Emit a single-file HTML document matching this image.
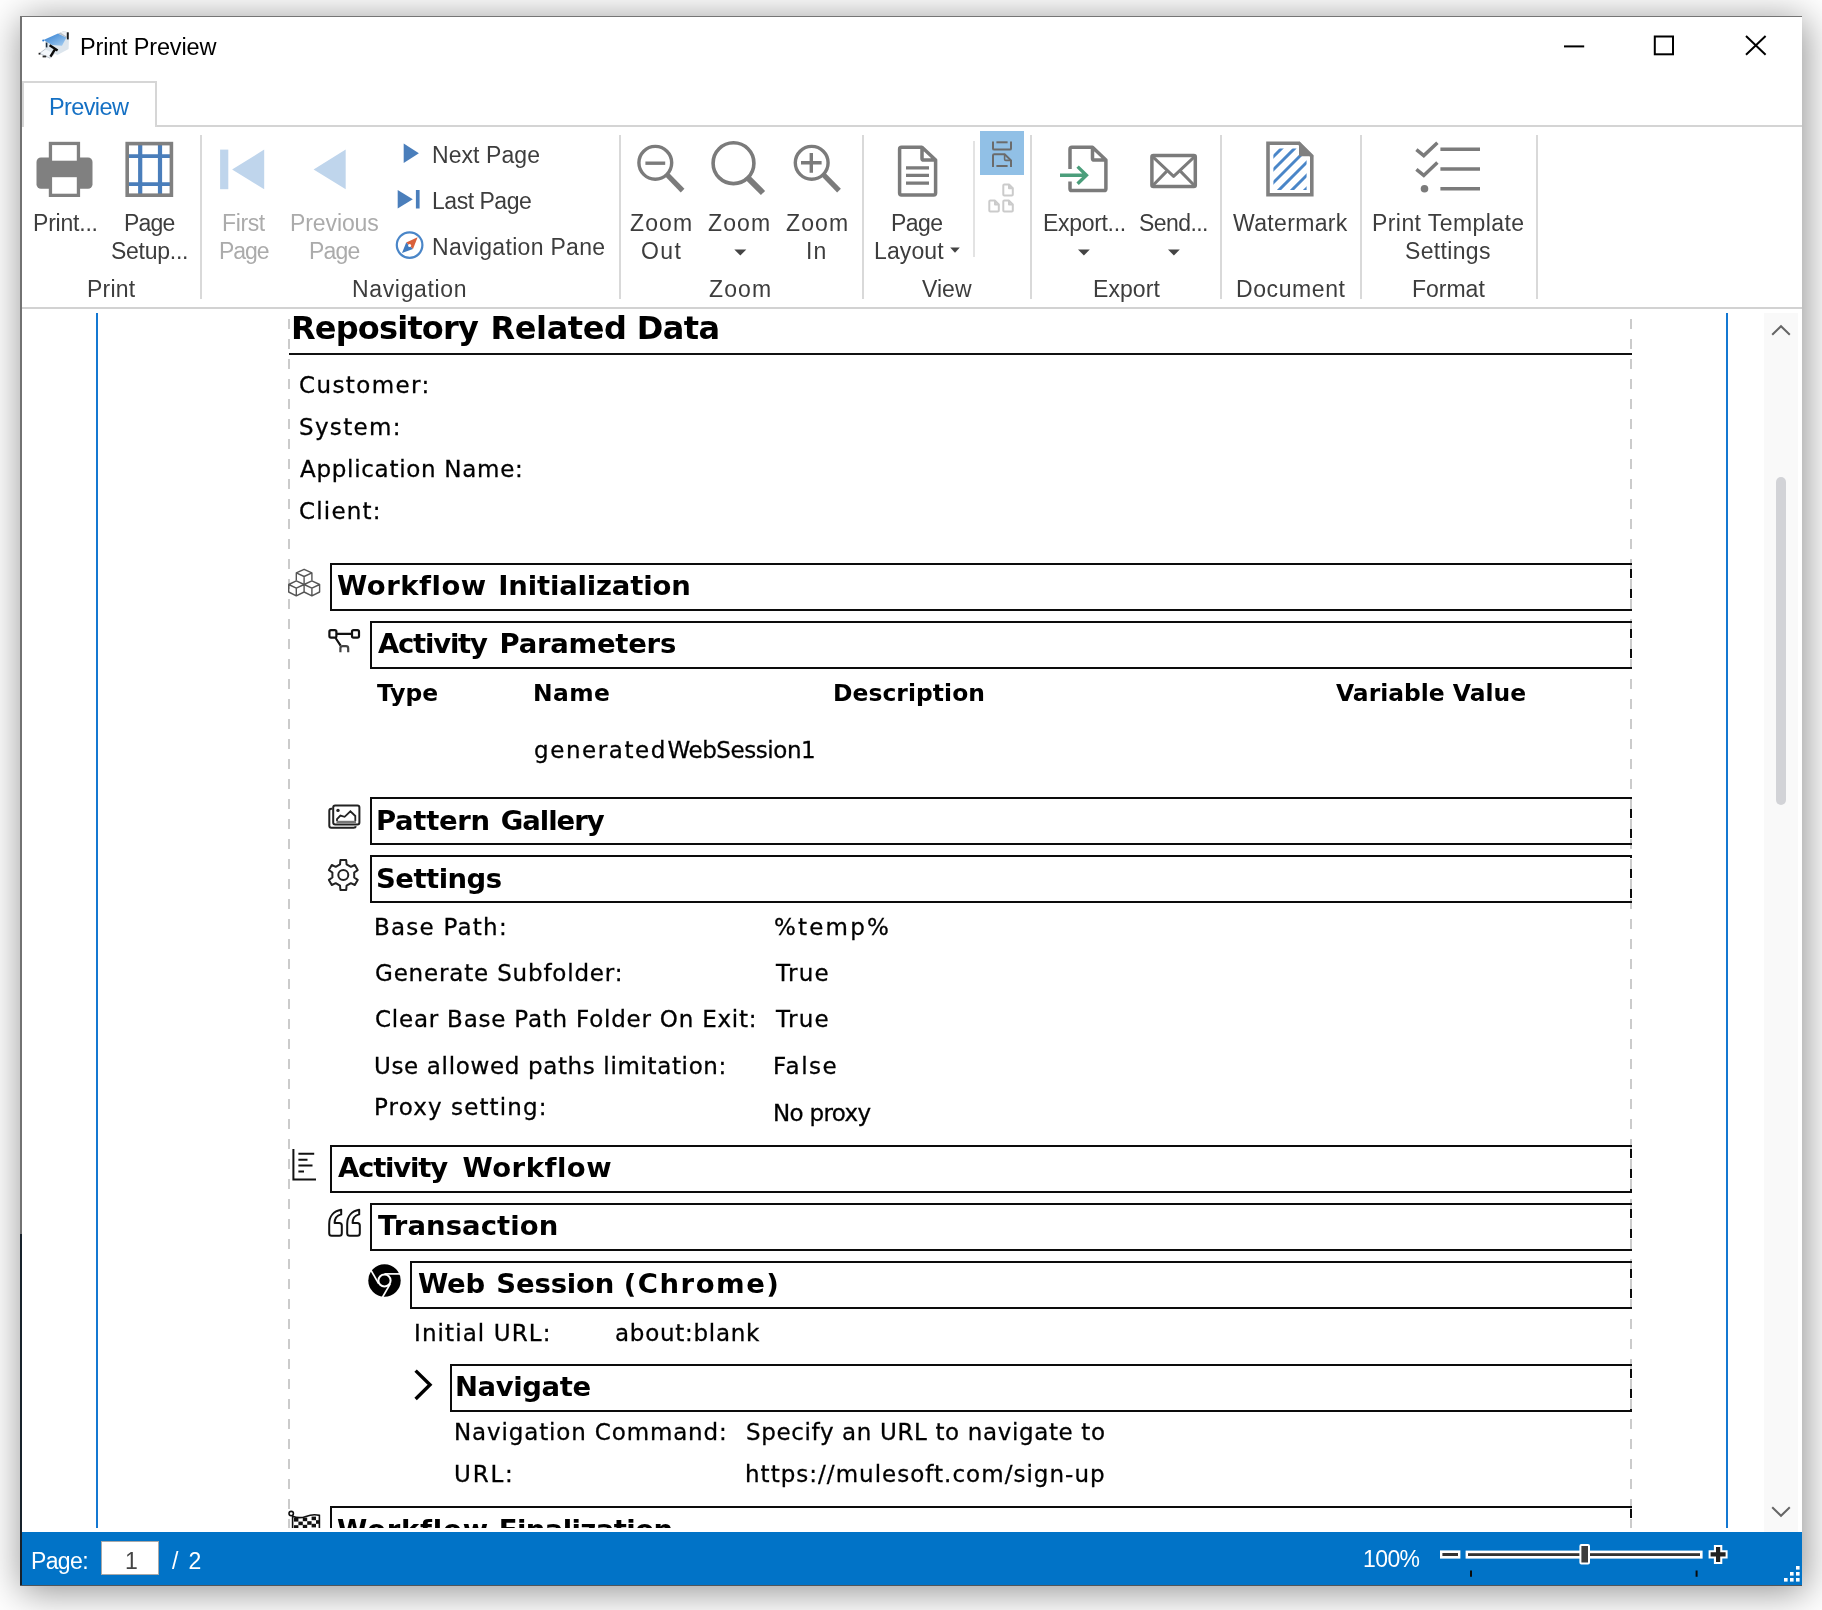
<!DOCTYPE html>
<html lang="en">
<head>
<meta charset="utf-8">
<title>Print Preview</title>
<style>
html,body{margin:0;padding:0;}
body{width:1822px;height:1610px;overflow:hidden;background:#fff;position:relative;font-family:"Liberation Sans",sans-serif;}
.abs,.t{position:absolute;}
.t{white-space:nowrap;display:block;}
#shadow{left:20px;top:16px;width:1782px;height:1570px;box-shadow:2px 4px 36px 1.5px rgba(0,0,0,.43);background:#fff;}
#win{left:20px;top:16px;width:1782px;height:1570px;background:#fff;}
#bl{left:20px;top:16px;width:2px;height:1570px;background:linear-gradient(#727272 0,#727272 1218px,#17212b 1218px,#17212b 100%);}
#bt{left:20px;top:16px;width:1782px;height:1px;background:#757575;}
#bb{left:20px;top:1585px;width:1782px;height:1px;background:#4f565c;}
.hl{background:#d4d4d4;}
.sep{top:135px;width:2px;height:164px;background:#d9d9d9;}
#docclip{left:0;top:0;width:1822px;height:1528px;overflow:hidden;}
.box{border:2px solid #0c0c0c;border-right:none;height:44px;box-sizing:content-box;}
.rb{left:1630px;width:2px;height:48px;background:linear-gradient(to bottom,#0c0c0c 0,#0c0c0c 9.5px,transparent 9.5px,transparent 20px);background-size:2px 20px;}
.t,#docclip{will-change:transform;}
#docclip .t.r{-webkit-text-stroke:.3px #000;}
#status{left:22px;top:1532px;width:1780px;height:53px;background:#0173c7;}
svg{position:absolute;overflow:visible;}
</style>
</head>
<body>
<div id="shadow" class="abs"></div>
<div id="win" class="abs"></div>

<!-- ===== document viewport ===== -->
<div id="docclip" class="abs">
  <div class="abs" style="left:96px;top:313px;width:2px;height:1215px;background:#1478d2"></div>
  <div class="abs" style="left:1726px;top:313px;width:2px;height:1215px;background:#1478d2"></div>
  <!-- margins (dashed) -->
  <div class="abs" id="ml" style="left:288px;top:313px;width:2px;height:1215px;background:linear-gradient(to bottom,#cbcbcb 0,#cbcbcb 10px,transparent 10px,transparent 20px);background-size:2px 20px;background-position:0 6px"></div>
  <div class="abs" id="mr" style="left:1630px;top:313px;width:2px;height:1215px;background:linear-gradient(to bottom,#cbcbcb 0,#cbcbcb 10px,transparent 10px,transparent 20px);background-size:2px 20px;background-position:0 6px"></div>
  <div class="abs" style="left:289px;top:353px;width:1343px;height:2px;background:#111"></div>
    <!-- section header boxes -->
<div class="abs box" style="left:330px;top:563px;width:1300px"></div>
<div class="abs box" style="left:370px;top:621px;width:1260px"></div>
<div class="abs box" style="left:370px;top:797px;width:1260px"></div>
<div class="abs box" style="left:370px;top:855px;width:1260px"></div>
<div class="abs box" style="left:330px;top:1145px;width:1300px"></div>
<div class="abs box" style="left:370px;top:1203px;width:1260px"></div>
<div class="abs box" style="left:410px;top:1261px;width:1220px"></div>
<div class="abs box" style="left:450px;top:1364px;width:1180px"></div>
<div class="abs box" style="left:330px;top:1506px;width:1300px"></div>
<!-- right (dashed) borders of boxes -->
<div class="abs rb" style="top:563px;background-position:0 6px"></div><div class="abs rb" style="top:621px;background-position:0 8px"></div>
<div class="abs rb" style="top:797px;background-position:0 12px"></div><div class="abs rb" style="top:855px;background-position:0 14px"></div>
<div class="abs rb" style="top:1145px;background-position:0 4px"></div><div class="abs rb" style="top:1203px;background-position:0 6px"></div>
<div class="abs rb" style="top:1261px;background-position:0 8px"></div><div class="abs rb" style="top:1364px;background-position:0 5px"></div>
<div class="abs rb" style="top:1506px;background-position:0 3px"></div>

<svg style="left:0;top:0" width="1822" height="1528" viewBox="0 0 1822 1528" fill="none">
  <!-- cubes (Workflow Initialization) -->
  <g stroke="#555" stroke-width="1.4" stroke-linejoin="round">
    <path d="M304.1 569.3 L311.9 572.9 L304.1 576.5 L296.3 572.9 Z M296.3 572.9 V580.4 M311.9 572.9 V580.4 M304.1 576.5 V584.6"/>
    <path d="M296.3 580.9 L304.1 584.5 L296.3 588.1 L288.7 584.5 Z M288.7 584.5 V592 L296.3 595.8 L304.1 592 V584.5 M296.3 588.1 V595.8"/>
    <path d="M311.9 580.9 L319.6 584.5 L311.9 588.1 L304.1 584.5 Z M319.6 584.5 V592 L311.9 595.8 L304.1 592 M311.9 588.1 V595.8"/>
  </g>
  <!-- nodes (Activity Parameters) -->
  <g stroke="#111" stroke-width="2.2">
    <rect x="329.4" y="630.2" width="7" height="7.4" rx="1.6"/>
    <rect x="352" y="630.2" width="7" height="7.4" rx="1.6"/>
    <path d="M336.6 633.9 H352 M335.6 638 L340.6 645.6"/>
    <path d="M340.4 652.2 V648.4 Q340.4 646.2 342.6 646.2 H346 Q348.2 646.2 348.2 648.4 V652.2" stroke="#444"/>
  </g>
  <!-- gallery (Pattern Gallery) -->
  <g stroke="#222" stroke-width="2">
    <path d="M332.3 808.8 H331.3 Q329.3 808.8 329.3 810.8 V825.8 Q329.3 827.8 331.3 827.8 H353.6 Q355.6 827.8 355.9 826.2"/>
    <rect x="333.2" y="805.6" width="26.2" height="19" rx="2"/>
    <path d="M337 821 V819 L340.4 815.6 L344.6 816.8 L350.4 811.3 L355.3 816 V821" stroke-width="1.8"/>
    <path d="M336.5 822 H356" stroke="#777" stroke-width="2.4"/>
    <circle cx="338" cy="810.4" r="1.7" fill="#222" stroke="none"/>
  </g>
  <!-- gear (Settings) -->
  <g stroke="#222" stroke-width="2" stroke-linejoin="round">
    <circle cx="343.3" cy="875" r="5"/>
    <path d="M340.0 864.3 L340.4 860.1 L346.2 860.1 L346.6 864.3 L350.9 866.8 L354.8 865.0 L357.7 870.1 L354.2 872.5 L354.2 877.5 L357.7 879.9 L354.8 885.0 L350.9 883.2 L346.6 885.7 L346.2 889.9 L340.4 889.9 L340.0 885.7 L335.7 883.2 L331.8 885.0 L328.9 879.9 L332.4 877.5 L332.4 872.5 L328.9 870.1 L331.8 865.0 L335.7 866.8 Z"/>
  </g>
  <!-- list (Activity Workflow) -->
  <g stroke="#111" stroke-width="2">
    <path d="M293.4 1149 V1179.4 H316"/>
    <path d="M298.4 1153.7 H314.2 M298.4 1159.8 H307.5 M298.4 1165.5 H312.5 M298.4 1171.6 H304"/>
  </g>
  <!-- quotes (Transaction) -->
  <g stroke="#111" stroke-width="2" stroke-linejoin="round">
    <path id="q1" d="M341.2 1209.8 C333.5 1211.2 329.2 1216.6 329.2 1224 V1233.3 Q329.2 1235.8 331.7 1235.8 H339.3 Q341.8 1235.8 341.8 1233.3 V1225.6 Q341.8 1223.1 339.3 1223.1 H334.6 C334.6 1218.3 336.9 1215.4 341.2 1214.4 Z"/>
    <path d="M359.2 1209.8 C351.5 1211.2 347.2 1216.6 347.2 1224 V1233.3 Q347.2 1235.8 349.7 1235.8 H357.3 Q359.8 1235.8 359.8 1233.3 V1225.6 Q359.8 1223.1 357.3 1223.1 H352.6 C352.6 1218.3 354.9 1215.4 359.2 1214.4 Z"/>
  </g>
  <!-- chrome (Web Session) -->
  <circle cx="384.5" cy="1280.5" r="16.2" fill="#000"/>
  <circle cx="384.5" cy="1280.5" r="6.1" stroke="#fff" stroke-width="2"/>
  <g stroke="#fff" stroke-width="1.7">
    <path d="M384.50 1273.90 L400.29 1273.90"/> <path d="M390.22 1283.80 L382.32 1297.48"/> <path d="M378.78 1283.80 L370.89 1270.12"/>
  </g>
  <!-- chevron (Navigate) -->
  <path d="M415.6 1370.6 L430 1384.8 L415.6 1399" stroke="#000" stroke-width="3.4" stroke-linejoin="miter"/>
  <!-- flag (Workflow Finalization) -->
  <g stroke="#111" stroke-width="1.6">
    <circle cx="291.2" cy="1513.6" r="2.2"/>
    <path d="M292.6 1515.6 V1530"/>
    <path d="M292.6 1516.2 Q299 1519 306 1516.4 T319.4 1515.4 V1530"/>
  </g>
  <g fill="#111">
    <rect x="294" y="1518" width="4.4" height="3.6"/><rect x="302.8" y="1517.6" width="4.4" height="3.6"/><rect x="311.6" y="1516.6" width="4.4" height="3.6"/>
    <rect x="298.4" y="1521.6" width="4.4" height="3.6"/><rect x="307.2" y="1521.2" width="4.4" height="3.6"/><rect x="316" y="1520.2" width="3.4" height="3.6"/>
    <rect x="294" y="1525.2" width="4.4" height="3.6"/><rect x="302.8" y="1524.8" width="4.4" height="3.6"/><rect x="311.6" y="1523.8" width="4.4" height="3.6"/>
  </g>
</svg>

  <span class="t" style='left:290.70px;top:308.50px;font:700 32px/38.00px "DejaVu Sans", "Liberation Sans", sans-serif;color:#000'><span style="letter-spacing:-0.812px;margin-left:0.000px">Repository</span> <span style="letter-spacing:-0.418px;margin-left:1.413px">Related</span> <span style="letter-spacing:-0.518px;margin-left:-0.929px">Data</span></span>
<span class="t r" style='left:299.00px;top:371.80px;font:400 23px/26.00px "DejaVu Sans", "Liberation Sans", sans-serif;letter-spacing:1.385px;color:#000'>Customer:</span>
<span class="t r" style='left:299.00px;top:413.80px;font:400 23px/26.00px "DejaVu Sans", "Liberation Sans", sans-serif;letter-spacing:1.322px;color:#000'>System:</span>
<span class="t r" style='left:300.00px;top:455.50px;font:400 23px/26.00px "DejaVu Sans", "Liberation Sans", sans-serif;letter-spacing:0.708px;color:#000'>Application Name:</span>
<span class="t r" style='left:299.00px;top:497.90px;font:400 23px/26.00px "DejaVu Sans", "Liberation Sans", sans-serif;letter-spacing:1.186px;color:#000'>Client:</span>
<span class="t" style='left:337.40px;top:571.30px;font:700 26.3px/30.00px "DejaVu Sans", "Liberation Sans", sans-serif;color:#000;transform:scaleX(1.045);transform-origin:0 0'><span style="letter-spacing:0.483px;margin-left:0.000px">Workflow</span> <span style="letter-spacing:-0.169px;margin-left:1.944px">Initialization</span></span>
<span class="t" style='left:378.20px;top:629.30px;font:700 26.3px/30.00px "DejaVu Sans", "Liberation Sans", sans-serif;color:#000;transform:scaleX(1.045);transform-origin:0 0'><span style="letter-spacing:-1.168px;margin-left:0.000px">Activity</span> <span style="letter-spacing:-0.237px;margin-left:3.077px">Parameters</span></span>
<span class="t" style='left:376.90px;top:680.00px;font:700 22.4px/26.00px "DejaVu Sans", "Liberation Sans", sans-serif;letter-spacing:0.013px;color:#000;transform:scaleX(1.045);transform-origin:0 0'>Type</span>
<span class="t" style='left:533.11px;top:680.00px;font:700 22.4px/26.00px "DejaVu Sans", "Liberation Sans", sans-serif;letter-spacing:0.371px;color:#000;transform:scaleX(1.045);transform-origin:0 0'>Name</span>
<span class="t" style='left:833.21px;top:680.00px;font:700 22.4px/26.00px "DejaVu Sans", "Liberation Sans", sans-serif;letter-spacing:0.061px;color:#000;transform:scaleX(1.045);transform-origin:0 0'>Description</span>
<span class="t" style='left:1335.70px;top:680.00px;font:700 22.4px/26.00px "DejaVu Sans", "Liberation Sans", sans-serif;letter-spacing:0.006px;color:#000;transform:scaleX(1.045);transform-origin:0 0'>Variable Value</span>
<span class="t r" style='left:534.40px;top:736.70px;font:400 23px/26.00px "DejaVu Sans", "Liberation Sans", sans-serif;color:#000'><span style="letter-spacing:1.563px;margin-left:0.000px">generated</span><span style="letter-spacing:-0.430px;margin-left:0.637px">WebSession1</span></span>
<span class="t" style='left:376.11px;top:805.60px;font:700 26.3px/30.00px "DejaVu Sans", "Liberation Sans", sans-serif;color:#000;transform:scaleX(1.045);transform-origin:0 0'><span style="letter-spacing:-0.285px;margin-left:-0.000px">Pattern</span> <span style="letter-spacing:-0.949px;margin-left:1.136px">Gallery</span></span>
<span class="t" style='left:376.35px;top:863.60px;font:700 26.3px/30.00px "DejaVu Sans", "Liberation Sans", sans-serif;letter-spacing:-0.490px;color:#000;transform:scaleX(1.045);transform-origin:0 0'>Settings</span>
<span class="t r" style='left:373.90px;top:914.40px;font:400 23px/26.00px "DejaVu Sans", "Liberation Sans", sans-serif;letter-spacing:1.229px;color:#000'>Base Path:</span>
<span class="t r" style='left:774.40px;top:914.40px;font:400 23px/26.00px "DejaVu Sans", "Liberation Sans", sans-serif;letter-spacing:2.195px;color:#000'>%temp%</span>
<span class="t r" style='left:374.90px;top:960.40px;font:400 23px/26.00px "DejaVu Sans", "Liberation Sans", sans-serif;letter-spacing:0.824px;color:#000'>Generate Subfolder:</span>
<span class="t r" style='left:776.40px;top:960.40px;font:400 23px/26.00px "DejaVu Sans", "Liberation Sans", sans-serif;letter-spacing:1.299px;color:#000'>True</span>
<span class="t r" style='left:374.90px;top:1006.20px;font:400 23px/26.00px "DejaVu Sans", "Liberation Sans", sans-serif;letter-spacing:0.775px;color:#000'>Clear Base Path Folder On Exit:</span>
<span class="t r" style='left:776.40px;top:1006.20px;font:400 23px/26.00px "DejaVu Sans", "Liberation Sans", sans-serif;letter-spacing:1.299px;color:#000'>True</span>
<span class="t r" style='left:373.90px;top:1052.70px;font:400 23px/26.00px "DejaVu Sans", "Liberation Sans", sans-serif;letter-spacing:0.649px;color:#000'>Use allowed paths limitation:</span>
<span class="t r" style='left:773.40px;top:1052.70px;font:400 23px/26.00px "DejaVu Sans", "Liberation Sans", sans-serif;letter-spacing:1.479px;color:#000'>False</span>
<span class="t r" style='left:373.90px;top:1094.40px;font:400 23px/26.00px "DejaVu Sans", "Liberation Sans", sans-serif;letter-spacing:1.127px;color:#000'>Proxy setting:</span>
<span class="t r" style='left:773.40px;top:1100.00px;font:400 23px/26.00px "DejaVu Sans", "Liberation Sans", sans-serif;letter-spacing:-0.659px;color:#000'>No proxy</span>
<span class="t" style='left:337.90px;top:1153.30px;font:700 26.3px/30.00px "DejaVu Sans", "Liberation Sans", sans-serif;color:#000;transform:scaleX(1.045);transform-origin:0 0'><span style="letter-spacing:-1.155px;margin-left:0.000px">Activity</span> <span style="letter-spacing:0.483px;margin-left:5.733px">Workflow</span></span>
<span class="t" style='left:378.20px;top:1210.90px;font:700 26.3px/30.00px "DejaVu Sans", "Liberation Sans", sans-serif;letter-spacing:0.069px;color:#000;transform:scaleX(1.045);transform-origin:0 0'>Transaction</span>
<span class="t" style='left:417.80px;top:1268.80px;font:700 26.3px/30.00px "DejaVu Sans", "Liberation Sans", sans-serif;color:#000;transform:scaleX(1.045);transform-origin:0 0'><span style="letter-spacing:-0.277px;margin-left:0.000px">Web</span> <span style="letter-spacing:-0.153px;margin-left:1.930px">Session</span> <span style="letter-spacing:1.455px;margin-left:-0.091px">(Chrome)</span></span>
<span class="t r" style='left:414.00px;top:1319.70px;font:400 23px/26.00px "DejaVu Sans", "Liberation Sans", sans-serif;letter-spacing:1.102px;color:#000'>Initial URL:</span>
<span class="t r" style='left:614.60px;top:1319.70px;font:400 23px/26.00px "DejaVu Sans", "Liberation Sans", sans-serif;letter-spacing:0.733px;color:#000'>about:blank</span>
<span class="t" style='left:455.21px;top:1372.00px;font:700 26.3px/30.00px "DejaVu Sans", "Liberation Sans", sans-serif;letter-spacing:-0.383px;color:#000;transform:scaleX(1.045);transform-origin:0 0'>Navigate</span>
<span class="t r" style='left:453.70px;top:1419.00px;font:400 23px/26.00px "DejaVu Sans", "Liberation Sans", sans-serif;letter-spacing:0.857px;color:#000'>Navigation Command:</span>
<span class="t r" style='left:746.00px;top:1419.00px;font:400 23px/26.00px "DejaVu Sans", "Liberation Sans", sans-serif;letter-spacing:0.636px;color:#000'>Specify an URL to navigate to</span>
<span class="t r" style='left:453.70px;top:1461.40px;font:400 23px/26.00px "DejaVu Sans", "Liberation Sans", sans-serif;letter-spacing:1.824px;color:#000'>URL:</span>
<span class="t r" style='left:745.00px;top:1461.40px;font:400 23px/26.00px "DejaVu Sans", "Liberation Sans", sans-serif;letter-spacing:1.024px;color:#000'>https://mulesoft.com/sign-up</span>
<span class="t" style='left:336.90px;top:1514.50px;font:700 26.3px/30.00px "DejaVu Sans", "Liberation Sans", sans-serif;color:#000;transform:scaleX(1.045);transform-origin:0 0'><span style="letter-spacing:0.729px;margin-left:0.000px">Workflow</span> <span style="letter-spacing:-0.556px;margin-left:0.358px">Finalization</span></span>
</div>

<!-- scrollbar -->
<div class="abs" style="left:1764px;top:313px;width:34px;height:1219px;background:#f9f9f9"></div>
<div class="abs" style="left:1776px;top:477px;width:10px;height:328px;border-radius:5px;background:#d2d3d7"></div>
<svg style="left:1764px;top:313px" width="34" height="1215" viewBox="0 0 34 1215" fill="none" stroke="#666" stroke-width="2">
  <path d="M8.2 21.8 L17 13.2 L25.8 21.8"/>
  <path d="M8.2 1194.2 L17 1202.8 L25.8 1194.2"/>
</svg>

<!-- ===== ribbon ===== -->
<div class="abs hl" style="left:22px;top:125px;width:1780px;height:2px"></div>
<div class="abs" id="tab" style="left:22px;top:81px;width:135px;height:46px;background:#fff;border:2px solid #d6d6d6;border-bottom:none;box-sizing:border-box"></div>
<div class="abs hl" style="left:22px;top:307px;width:1780px;height:2px;background:#d2d2d2"></div>
<div class="abs sep" style="left:200px"></div>
<div class="abs sep" style="left:619px"></div>
<div class="abs sep" style="left:862px"></div>
<div class="abs sep" style="left:1030px"></div>
<div class="abs sep" style="left:1220px"></div>
<div class="abs sep" style="left:1360px"></div>
<div class="abs sep" style="left:1536px"></div>
<div class="abs" style="left:973px;top:141px;width:2px;height:116px;background:#e3e3e3"></div>
<div class="abs" style="left:980px;top:131px;width:44px;height:44px;background:#91c0e6"></div>
<svg style="left:0;top:0" width="1822" height="320" viewBox="0 0 1822 320" fill="none">
  <!-- Print -->
  <g>
    <rect x="36.5" y="157.4" width="56" height="31.3" rx="4.5" fill="#808080"/>
    <rect x="48.8" y="141.8" width="31.3" height="55.2" fill="#808080"/>
    <rect x="52.1" y="145.1" width="24.7" height="15.6" fill="#fff"/>
    <rect x="52.1" y="177.2" width="24.7" height="16.5" fill="#fff"/>
  </g>
  <!-- Page Setup -->
  <g>
    <path d="M139.2 145 V194 M159 145 V194" stroke="#4a7ebb" stroke-width="4.2" transform="translate(1 0)"/>
    <path d="M128 156.1 H171 M128 184.1 H171" stroke="#4a7ebb" stroke-width="3.8"/>
    <rect x="127.2" y="143.6" width="44.2" height="51.6" stroke="#808080" stroke-width="3.6"/>
  </g>
  <!-- First / Previous (disabled) -->
  <g fill="#bfd5ec">
    <rect x="220.1" y="149.6" width="8.2" height="39.6"/>
    <path d="M232.1 169.4 L264.2 149.6 V189.2 Z"/>
    <path d="M313.6 169.4 L345.7 149.6 V189.2 Z"/>
  </g>
  <!-- Next / Last -->
  <g fill="#4a7ebb">
    <path d="M403.7 143.5 L418.9 153.2 L403.7 162.9 Z"/>
    <path d="M397.7 190 L412.8 199.2 L397.7 208.5 Z"/>
    <rect x="415.9" y="190" width="3.7" height="18.5"/>
  </g>
  <!-- Navigation pane compass -->
  <g>
    <circle cx="409.6" cy="245.1" r="12.8" stroke="#4a86c8" stroke-width="2.2"/>
    <path d="M406.2 242.4 L417.6 237.2 L413 248.9 L409.4 245.7 Z" fill="#d9603b"/>
    <path d="M406.2 242.4 L402 253 L413 248.9 L409.4 245.7 Z" fill="#3f7bbf"/>
    <circle cx="409.6" cy="245.6" r="1.5" fill="#fff"/>
  </g>
  <!-- Zoom Out -->
  <g stroke="#7b7b7b">
    <circle cx="655.3" cy="162.8" r="16.4" stroke-width="3.4"/>
    <path d="M645.4 163.2 H665.2" stroke-width="3.4"/>
    <path d="M667.4 175 L682.6 190.6" stroke-width="5.2"/>
  </g>
  <!-- Zoom -->
  <g stroke="#7b7b7b">
    <circle cx="733.5" cy="163.2" r="20.4" stroke-width="3.6"/>
    <path d="M748.4 178.4 L763 193" stroke-width="6"/>
  </g>
  <!-- Zoom In -->
  <g stroke="#7b7b7b">
    <circle cx="811.7" cy="162.8" r="16.4" stroke-width="3.4"/>
    <path d="M801 162.8 H821.6 M811.3 152.9 V172.7" stroke-width="3.4"/>
    <path d="M823.8 175 L839 190.6" stroke-width="5.2"/>
  </g>
  <!-- Page Layout -->
  <g stroke="#7b7b7b" stroke-width="3.5" stroke-linejoin="round">
    <path d="M922 147.3 H901.5 Q899.6 147.3 899.6 149.2 V193 Q899.6 194.9 901.5 194.9 H933.7 Q935.6 194.9 935.6 193 V160 L922 147.3 V158.4 Q922 160 923.8 160 H935.6"/>
    <path d="M906 167.8 H929 M906 175.4 H929 M906 183.2 H929" stroke-width="3.2"/>
  </g>
  <!-- view small buttons -->
  <g stroke="#6b6b6b" stroke-width="2">
    <path d="M993 141.5 V148.4 Q993 149.6 994.2 149.6 H1009.8 Q1011 149.6 1011 148.4 V141.5"/>
    <path d="M996.4 142.3 H1007.6"/>
    <path d="M993 167 V155.5 Q993 154.3 994.2 154.3 H1004.6 L1011 160.4 V167"/>
    <path d="M1004.6 154.8 V159.2 Q1004.6 160.4 1005.8 160.4 H1010.6" stroke-width="1.6"/>
    <path d="M996.4 166 H1007.6"/>
  </g>
  <g stroke="#cbcbcb" stroke-width="2" stroke-linejoin="round">
    <path d="M1009 184.5 H1004.3 Q1003.3 184.5 1003.3 185.5 V194.5 Q1003.3 195.5 1004.3 195.5 H1011.8 Q1012.8 195.5 1012.8 194.5 V188.3 Z M1009 184.5 V188.3 H1012.8"/>
    <path d="M995 200.6 H990.3 Q989.3 200.6 989.3 201.6 V210.6 Q989.3 211.6 990.3 211.6 H997.8 Q998.8 211.6 998.8 210.6 V204.4 Z M995 200.6 V204.4 H998.8"/>
    <path d="M1009 200.6 H1004.3 Q1003.3 200.6 1003.3 201.6 V210.6 Q1003.3 211.6 1004.3 211.6 H1011.8 Q1012.8 211.6 1012.8 210.6 V204.4 Z M1009 200.6 V204.4 H1012.8"/>
  </g>
  <!-- Export -->
  <g stroke-linejoin="round">
    <path d="M1070 169 V149.2 Q1070 147.3 1071.9 147.3 H1092.5 L1105.9 160 V188.7 Q1105.9 190.6 1104 190.6 H1071.9 Q1070 190.6 1070 188.7 V181.4 M1092.5 147.3 V158.4 Q1092.5 160 1094.3 160 H1105.9" stroke="#7b7b7b" stroke-width="3.5"/>
    <path d="M1060 175.2 H1085.5 M1077.6 166.6 L1086.4 175.2 L1077.6 183.8" stroke="#4b9e7b" stroke-width="3.4" stroke-linejoin="miter"/>
  </g>
  <!-- Send -->
  <g stroke="#7b7b7b" stroke-width="3.5" stroke-linejoin="round">
    <rect x="1151.9" y="155.6" width="43.4" height="31" rx="1.5"/>
    <path d="M1152.6 156.6 L1173.6 176.4 L1194.6 156.6" stroke-width="3"/>
    <path d="M1152.6 185.8 L1166.6 171.4 M1194.6 185.8 L1180.6 171.4" stroke-width="3"/>
  </g>
  <!-- Watermark -->
  <g>
    <clipPath id="wmclip"><path d="M1273.4 148.6 H1296.4 L1306.6 158.8 V190 H1273.4 Z"/></clipPath>
    <g clip-path="url(#wmclip)" stroke="#4a86c8" stroke-width="3">
      <path d="M1262 168 L1296 134 M1262 181 L1309 134 M1262 194 L1322 134 M1268 201 L1322 147 M1281 201 L1322 160 M1294 201 L1322 173"/>
    </g>
    <path d="M1299 143.2 H1268 V194.8 H1311.8 V156 Z" stroke="#808080" stroke-width="3.6" stroke-linejoin="miter"/>
    <path d="M1299 141.6 L1313.6 156.2 H1299 Z" fill="#808080"/>
  </g>
  <!-- Print template settings (checklist) -->
  <g stroke="#7b7b7b" stroke-width="3.5">
    <path d="M1416.4 149.6 L1423.8 155.6 L1437.4 142.8"/>
    <path d="M1416.4 169.4 L1423.8 175.4 L1437.4 162.6"/>
    <path d="M1440.4 149.3 H1480 M1440.4 169.1 H1480 M1440.4 188.8 H1480"/>
    <circle cx="1424.5" cy="188.8" r="3.8" fill="#7b7b7b" stroke="none"/>
  </g>
  <!-- dropdown arrows -->
  <g fill="#444">
    <path d="M734.3 249.6 H746.3 L740.3 255.4 Z"/>
    <path d="M950.2 247.6 H959.8 L955 252.8 Z"/>
    <path d="M1078 249.6 H1089.8 L1083.9 255.4 Z"/>
    <path d="M1168 249.6 H1179.8 L1173.9 255.4 Z"/>
  </g>
  <!-- window controls -->
  <g stroke="#000" stroke-width="2">
    <path d="M1564 46.4 H1584.2"/>
    <rect x="1654.8" y="36.5" width="18.2" height="17.8"/>
    <path d="M1746 36 L1765.6 54.8 M1765.6 36 L1746 54.8"/>
  </g>
  <!-- title bar app icon (printer) -->
  <defs>
    <linearGradient id="pblue" x1="0" y1="0" x2="1" y2="1">
      <stop offset="0" stop-color="#2b7bd0"/><stop offset="1" stop-color="#a9d0f2"/>
    </linearGradient>
  </defs>
  <g>
    <path d="M39.5 53.4 L51.5 44.5 L60 47.6 L50.2 58.2 Z" fill="#f3f7fb" stroke="#aeb8c2" stroke-width=".8"/>
    <path d="M45 40.5 L58 34.5 L69 38 L68.6 49 L57.4 55 L45.6 49.6 Z" fill="#dce5ed"/>
    <path d="M43.5 40 L58 33.5 L66.4 37.4 L62 45.8 L52 45 Z" fill="url(#pblue)"/>
    <path d="M58 33.6 L63.6 31.2 L69 32.6 L68.6 39.6 L66.2 37.4 Z" fill="#b9c0c7"/>
    <path d="M60.4 32.4 L64 31.2 L66.6 32 L66.4 36.4 Z" fill="#eef1f4"/>
    <path d="M49.6 45.2 L57.6 50.4 M55.4 48.6 L50.4 56.6" stroke="#0a0a0a" stroke-width="2.4"/>
    <path d="M67.8 32.4 V39.4" stroke="#1a1a1a" stroke-width="1.8"/>
    <path d="M46.6 42.6 V47.4" stroke="#1b2b3b" stroke-width="1.6"/>
    <circle cx="43.2" cy="40.6" r="1" fill="#2b7bd0"/>
    <rect x="38.6" y="52.8" width="1.8" height="1.8" fill="#222"/>
    <rect x="42.6" y="55.6" width="3.6" height="1.8" fill="#2a2a2a"/>
  </g>
</svg>


<!-- ===== status bar ===== -->
<div id="status" class="abs"></div>
<div class="abs" style="left:101px;top:1541px;width:58px;height:34px;background:#fff;border:1px solid #a9a9a9;box-sizing:border-box"></div>
<svg style="left:0;top:1532px" width="1822" height="54" viewBox="0 1532 1822 54" fill="none">
  <!-- zoom slider -->
  <rect x="1440" y="1550.4" width="20.4" height="8.2" fill="#fff"/><rect x="1442.4" y="1553" width="15.6" height="3" fill="#333"/>
  <rect x="1465.6" y="1550.6" width="237" height="8" fill="#fff"/><rect x="1468" y="1553.2" width="232" height="2.8" fill="#333"/>
  <rect x="1580.4" y="1545" width="8.6" height="18.6" rx="1" fill="#3c3c3c" stroke="#fff" stroke-width="2"/>
  <path d="M1708.6 1554.4 H1727.6 M1718.1 1544.9 V1563.9" stroke="#fff" stroke-width="8.4"/>
  <path d="M1710.6 1554.4 H1725.6 M1718.1 1546.9 V1561.9" stroke="#222" stroke-width="4.2"/>
  <path d="M1471 1570.4 V1576.8 M1696.6 1570.4 V1576.8" stroke="#0a0a0a" stroke-width="2"/>
  <!-- size grip -->
  <g fill="#fff">
    <rect x="1796" y="1566" width="3.6" height="3.6"/>
    <rect x="1790" y="1572" width="3.6" height="3.6"/><rect x="1796" y="1572" width="3.6" height="3.6"/>
    <rect x="1784" y="1578" width="3.6" height="3.6"/><rect x="1790" y="1578" width="3.6" height="3.6"/><rect x="1796" y="1578" width="3.6" height="3.6"/>
  </g>
</svg>

<span class="t" style='left:80.20px;top:34.40px;font:400 23.5px/26.00px "Liberation Sans", sans-serif;letter-spacing:-0.172px;color:#000'>Print Preview</span>
<span class="t" style='left:48.60px;top:93.60px;font:400 23.5px/26.00px "Liberation Sans", sans-serif;letter-spacing:-0.618px;color:#1470c4'>Preview</span>
<span class="t" style='left:33.00px;top:209.70px;font:400 23px/26.00px "Liberation Sans", sans-serif;letter-spacing:-0.210px;color:#3d3d3d'>Print...</span>
<span class="t" style='left:124.40px;top:209.70px;font:400 23px/26.00px "Liberation Sans", sans-serif;letter-spacing:-0.841px;color:#3d3d3d'>Page</span>
<span class="t" style='left:111.20px;top:237.50px;font:400 23px/26.00px "Liberation Sans", sans-serif;letter-spacing:-0.269px;color:#3d3d3d'>Setup...</span>
<span class="t" style='left:222.20px;top:209.70px;font:400 23px/26.00px "Liberation Sans", sans-serif;letter-spacing:-0.380px;color:#ababab'>First</span>
<span class="t" style='left:219.00px;top:237.50px;font:400 23px/26.00px "Liberation Sans", sans-serif;letter-spacing:-1.075px;color:#ababab'>Page</span>
<span class="t" style='left:290.40px;top:209.70px;font:400 23px/26.00px "Liberation Sans", sans-serif;letter-spacing:-0.098px;color:#ababab'>Previous</span>
<span class="t" style='left:309.30px;top:237.50px;font:400 23px/26.00px "Liberation Sans", sans-serif;letter-spacing:-0.841px;color:#ababab'>Page</span>
<span class="t" style='left:431.70px;top:142.10px;font:400 23px/26.00px "Liberation Sans", sans-serif;letter-spacing:0.074px;color:#3d3d3d'>Next Page</span>
<span class="t" style='left:431.70px;top:187.90px;font:400 23px/26.00px "Liberation Sans", sans-serif;letter-spacing:-0.473px;color:#3d3d3d'>Last Page</span>
<span class="t" style='left:431.70px;top:234.00px;font:400 23px/26.00px "Liberation Sans", sans-serif;letter-spacing:0.308px;color:#3d3d3d'>Navigation Pane</span>
<span class="t" style='left:630.10px;top:209.70px;font:400 23px/26.00px "Liberation Sans", sans-serif;letter-spacing:1.089px;color:#3d3d3d'>Zoom</span>
<span class="t" style='left:640.60px;top:237.50px;font:400 23px/26.00px "Liberation Sans", sans-serif;letter-spacing:1.409px;color:#3d3d3d'>Out</span>
<span class="t" style='left:708.30px;top:209.70px;font:400 23px/26.00px "Liberation Sans", sans-serif;letter-spacing:1.089px;color:#3d3d3d'>Zoom</span>
<span class="t" style='left:786.20px;top:209.70px;font:400 23px/26.00px "Liberation Sans", sans-serif;letter-spacing:1.089px;color:#3d3d3d'>Zoom</span>
<span class="t" style='left:806.40px;top:237.50px;font:400 23px/26.00px "Liberation Sans", sans-serif;letter-spacing:1.210px;color:#3d3d3d'>In</span>
<span class="t" style='left:891.00px;top:209.70px;font:400 23px/26.00px "Liberation Sans", sans-serif;letter-spacing:-0.575px;color:#3d3d3d'>Page</span>
<span class="t" style='left:873.70px;top:237.50px;font:400 23px/26.00px "Liberation Sans", sans-serif;letter-spacing:0.107px;color:#3d3d3d'>Layout</span>
<span class="t" style='left:1042.50px;top:209.70px;font:400 23px/26.00px "Liberation Sans", sans-serif;letter-spacing:-0.319px;color:#3d3d3d'>Export...</span>
<span class="t" style='left:1139.20px;top:209.70px;font:400 23px/26.00px "Liberation Sans", sans-serif;letter-spacing:-0.583px;color:#3d3d3d'>Send...</span>
<span class="t" style='left:1232.90px;top:209.70px;font:400 23px/26.00px "Liberation Sans", sans-serif;letter-spacing:0.338px;color:#3d3d3d'>Watermark</span>
<span class="t" style='left:1371.90px;top:209.70px;font:400 23px/26.00px "Liberation Sans", sans-serif;letter-spacing:0.422px;color:#3d3d3d'>Print Template</span>
<span class="t" style='left:1404.90px;top:237.50px;font:400 23px/26.00px "Liberation Sans", sans-serif;letter-spacing:0.328px;color:#3d3d3d'>Settings</span>
<span class="t" style='left:87.30px;top:276.00px;font:400 23px/26.00px "Liberation Sans", sans-serif;letter-spacing:0.225px;color:#3d3d3d'>Print</span>
<span class="t" style='left:352.10px;top:276.00px;font:400 23px/26.00px "Liberation Sans", sans-serif;letter-spacing:0.657px;color:#3d3d3d'>Navigation</span>
<span class="t" style='left:709.30px;top:276.00px;font:400 23px/26.00px "Liberation Sans", sans-serif;letter-spacing:1.089px;color:#3d3d3d'>Zoom</span>
<span class="t" style='left:922.00px;top:276.00px;font:400 23px/26.00px "Liberation Sans", sans-serif;letter-spacing:0.024px;color:#3d3d3d'>View</span>
<span class="t" style='left:1092.60px;top:276.00px;font:400 23px/26.00px "Liberation Sans", sans-serif;letter-spacing:0.063px;color:#3d3d3d'>Export</span>
<span class="t" style='left:1236.40px;top:276.00px;font:400 23px/26.00px "Liberation Sans", sans-serif;letter-spacing:0.595px;color:#3d3d3d'>Document</span>
<span class="t" style='left:1412.30px;top:276.00px;font:400 23px/26.00px "Liberation Sans", sans-serif;letter-spacing:-0.010px;color:#3d3d3d'>Format</span>
<span class="t" style='left:30.50px;top:1547.60px;font:400 23px/26.00px "Liberation Sans", sans-serif;letter-spacing:-0.629px;color:#fff'>Page:</span>
<span class="t" style='left:125.20px;top:1547.60px;font:400 23px/26.00px "Liberation Sans", sans-serif;letter-spacing:0.000px;color:#444'>1</span>
<span class="t" style='left:172.30px;top:1547.60px;font:400 23px/26.00px "Liberation Sans", sans-serif;letter-spacing:1.860px;color:#fff'>/ 2</span>
<span class="t" style='left:1362.80px;top:1546.30px;font:400 23px/26.00px "Liberation Sans", sans-serif;letter-spacing:-0.592px;color:#fff'>100%</span>

<div id="bl" class="abs"></div>
<div id="bt" class="abs"></div>
<div id="bb" class="abs"></div>
</body>
</html>
